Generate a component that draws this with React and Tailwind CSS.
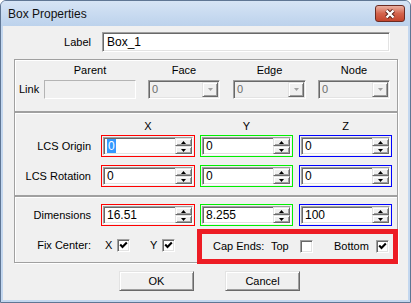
import React from 'react';

// classic win32 3D edges
const sunken = 'border border-t-[#a0a0a0] border-l-[#a0a0a0] border-r-white border-b-white shadow-[inset_1px_1px_0_#696969,inset_-1px_-1px_0_#e3e3e3]';
const raised = 'border border-t-[#e3e3e3] border-l-[#e3e3e3] border-r-[#696969] border-b-[#696969] shadow-[inset_1px_1px_0_#fff,inset_-1px_-1px_0_#a0a0a0]';
const etched = 'border border-[#a0a0a0] shadow-[inset_1px_1px_0_#fff,1px_1px_0_#fff]';

const Arrow = ({ up, color = '#000' }) => (
  <svg width="5" height="3" viewBox="0 0 5 3">
    <path d={up ? 'M2.5 0 L5 3 L0 3 Z' : 'M0 0 L5 0 L2.5 3 Z'} fill={color} />
  </svg>
);

const Spin = ({ value, border, width, selected }) => (
  <div className={`${width} h-[22px] border p-px ${border}`}>
    <div className={`h-full flex bg-white ${sunken}`}>
      <div className="flex-1 flex items-center pl-[3px] text-[12px]">
        <span className={selected ? 'bg-[#3399ff] text-white px-px leading-[14px]' : 'leading-[14px]'}>{value}</span>
      </div>
      <div className="w-[17px] flex flex-col">
        <div className={`h-[8px] flex items-center justify-center bg-[#f0f0f0] ${raised}`}>
          <Arrow up />
        </div>
        <div className={`h-[8px] flex items-center justify-center bg-[#f0f0f0] ${raised}`}>
          <Arrow />
        </div>
      </div>
    </div>
  </div>
);

const Combo = ({ width }) => (
  <div className={`${width} h-[19px] flex p-px bg-[#f0f0f0] ${sunken}`}>
    <div className="flex-1 flex items-center pl-[2px] text-[#6d6d6d]">0</div>
    <div className={`w-[16px] flex items-center justify-center bg-[#f0f0f0] ${raised}`}>
      <Arrow color="#a0a0a0" />
    </div>
  </div>
);

const Check = ({ checked }) => (
  <div className={`w-[13px] h-[13px] bg-white flex items-center justify-center ${sunken}`}>
    {checked && (
      <svg width="9" height="9" viewBox="0 0 9 9">
        <path d="M1.2 3.6 L3.5 6 L7.8 1.6" fill="none" stroke="#000" strokeWidth="2.1" />
      </svg>
    )}
  </div>
);

const Button = ({ label, className }) => (
  <div className={`w-[75px] h-[20px] flex items-center justify-center bg-[#f0f0f0] ${raised} ${className}`}>
    {label}
  </div>
);

const App = () => {
  return (
    <div className="w-[411px] h-[303px] bg-[#c3d7ef] border border-[#5f7694] rounded-t-[6px] flex flex-col overflow-hidden">
      {/* Title bar */}
      <div className="h-[25px] flex items-start justify-between pl-[7px] pr-[5px] bg-linear-to-b from-[#d6e4f5] to-[#bcd2ec]">
        <span className="mt-[5px] text-[12px] leading-[16px] text-[#111] font-['Liberation_Sans',Arial,sans-serif]">Box Properties</span>
        <div className="mt-[4px] w-[30px] h-[17px] rounded-[3px] border border-[#6b2b22] bg-linear-to-b from-[#eab0a2] via-[#d4644d] to-[#c4442c] flex items-center justify-center">
          <svg width="14" height="10" viewBox="0 0 14 10">
            <path d="M3.5 1.5 L10.5 8.5 M10.5 1.5 L3.5 8.5" stroke="#5a2019" strokeWidth="4.2" />
            <path d="M3.5 1.5 L10.5 8.5 M10.5 1.5 L3.5 8.5" stroke="#fff" strokeWidth="2.4" />
          </svg>
        </div>
      </div>

      {/* Client area */}
      <div className="mx-[2px] h-[274px] bg-[#f0f0f0] flex flex-col pt-[6px] text-[11px] leading-[13px] text-black font-['Liberation_Sans',Arial,sans-serif]">
        {/* Label row */}
        <div className="flex items-center">
          <div className="w-[88px] text-right">Label</div>
          <div className={`ml-[11px] w-[288px] h-[20px] bg-white flex items-center pl-[4px] text-[12px] ${sunken}`}>Box_1</div>
        </div>

        {/* Link group */}
        <div className={`ml-[11px] mt-[7px] w-[384px] h-[53px] flex pt-[4px] ${etched}`}>
          <div className="w-[29px] flex flex-col">
            <div className="h-[16px]" />
            <div className="h-[19px] flex items-center pl-[4px]">Link</div>
          </div>
          <div className="w-[92px] flex flex-col items-center">
            <div className="h-[13px]">Parent</div>
            <div className="mt-[3px] w-[92px] h-[19px] bg-[#f0f0f0] border border-[#b4b4b4] border-r-white border-b-white" />
          </div>
          <div className="ml-[12px] w-[72px] flex flex-col items-center">
            <div className="h-[13px]">Face</div>
            <div className="mt-[3px]"><Combo width="w-[72px]" /></div>
          </div>
          <div className="ml-[13px] w-[73px] flex flex-col items-center">
            <div className="h-[13px]">Edge</div>
            <div className="mt-[3px]"><Combo width="w-[73px]" /></div>
          </div>
          <div className="ml-[12px] w-[72px] flex flex-col items-center">
            <div className="h-[13px]">Node</div>
            <div className="mt-[3px]"><Combo width="w-[72px]" /></div>
          </div>
        </div>

        {/* LCS group */}
        <div className={`ml-[11px] w-[384px] h-[84px] flex flex-col pt-[7px] ${etched}`}>
          <div className="flex h-[13px]">
            <div className="w-[86px]" />
            <div className="w-[94px] text-center">X</div>
            <div className="ml-[5px] w-[93px] text-center">Y</div>
            <div className="ml-[6px] w-[93px] text-center">Z</div>
          </div>
          <div className="mt-[2px] flex items-center">
            <div className="w-[76px] text-right">LCS Origin</div>
            <div className="ml-[10px]"><Spin value="0" width="w-[94px]" border="border-[#ff0000]" selected /></div>
            <div className="ml-[5px]"><Spin value="0" width="w-[93px]" border="border-[#00f000]" /></div>
            <div className="ml-[6px]"><Spin value="0" width="w-[93px]" border="border-[#0000ff]" /></div>
          </div>
          <div className="mt-[8px] flex items-center">
            <div className="w-[76px] text-right">LCS Rotation</div>
            <div className="ml-[10px]"><Spin value="0" width="w-[94px]" border="border-[#ff0000]" /></div>
            <div className="ml-[5px]"><Spin value="0" width="w-[93px]" border="border-[#00f000]" /></div>
            <div className="ml-[6px]"><Spin value="0" width="w-[93px]" border="border-[#0000ff]" /></div>
          </div>
        </div>

        {/* Dimensions group */}
        <div className={`ml-[11px] w-[384px] flex flex-col pt-[7px] ${etched}`}>
          <div className="flex items-center">
            <div className="w-[76px] text-right">Dimensions</div>
            <div className="ml-[10px]"><Spin value="16.51" width="w-[94px]" border="border-[#ff0000]" /></div>
            <div className="ml-[5px]"><Spin value="8.255" width="w-[93px]" border="border-[#00f000]" /></div>
            <div className="ml-[6px]"><Spin value="100" width="w-[93px]" border="border-[#0000ff]" /></div>
          </div>
          <div className="mt-[3px] flex items-center">
            <div className="w-[76px] text-right">Fix Center:</div>
            <div className="ml-[14px] w-[12px]">X</div>
            <Check checked />
            <div className="ml-[20px] w-[12px]">Y</div>
            <Check checked />
            <div className="relative ml-[22px] -mr-px -mb-[2px] w-[201px] h-[35px] border-[5px] border-[#ed1c24] flex items-center pl-[11px]">
              <div className="w-[58px]">Cap Ends:</div>
              <div className="w-[29px]">Top</div>
              <Check />
              <div className="ml-[21px] w-[42px]">Bottom</div>
              <Check checked />
            </div>
          </div>
        </div>

        {/* Buttons */}
        <div className="mt-[8px] flex">
          <Button label="OK" className="ml-[116px]" />
          <Button label="Cancel" className="ml-[31px]" />
        </div>
      </div>
    </div>
  );
};

export default App;
